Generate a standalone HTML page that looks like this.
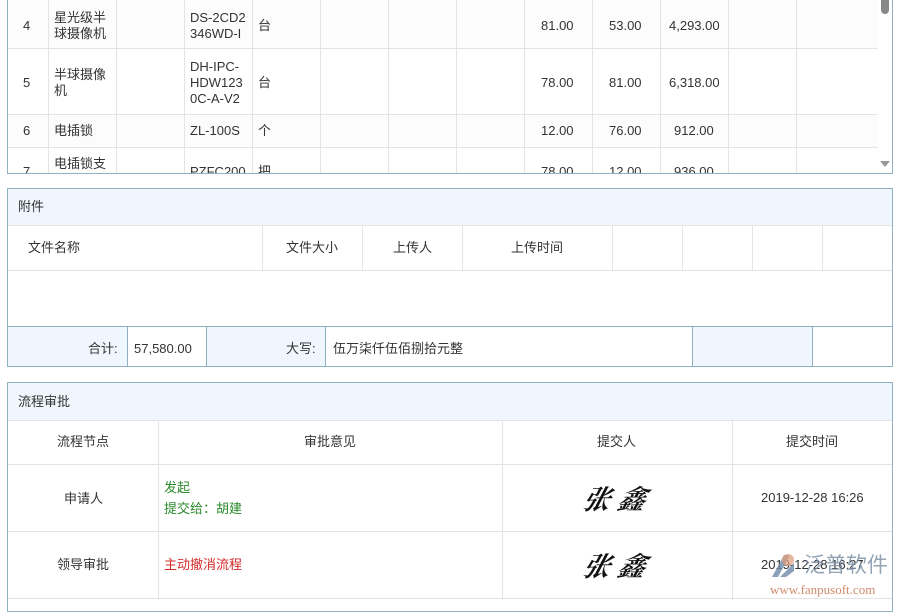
<!DOCTYPE html>
<html><head><meta charset="utf-8">
<style>
*{margin:0;padding:0;box-sizing:border-box}
body{width:900px;height:600px;overflow:hidden;background:#fff;font-family:"Liberation Sans","Noto Sans CJK SC",sans-serif;font-size:13px;color:#333;position:relative}
.a{position:absolute}
.vl{position:absolute;width:1px;background:#e4e4e4}
.hl{position:absolute;height:1px;background:#e4e4e4}
.t{position:absolute;white-space:nowrap;line-height:16px;margin-top:1px}
.frame{position:absolute;border:1px solid #8fb0c0}
.hd{position:absolute;background:#eff6fd}
.sig{position:absolute;white-space:nowrap;font-size:27px;line-height:30px;font-family:'Noto Serif CJK SC',serif;font-weight:700;font-style:italic;letter-spacing:8px;color:#111;transform:skewX(-15deg)}
</style></head><body>

<!-- top table -->
<div class="a" style="left:7px;top:0;width:886px;height:174px;overflow:hidden;border:1px solid #8fb0c0;border-top:none">
  <div class="a" style="left:0;top:0;width:870px;height:49px;background:#fcfcfc"></div>
  <div class="a" style="left:0;top:114px;width:870px;height:33px;background:#fcfcfc"></div>
  <div class="hl" style="left:0;top:48px;width:870px"></div>
  <div class="hl" style="left:0;top:114px;width:870px"></div>
  <div class="hl" style="left:0;top:147px;width:870px"></div>
  <div class="vl" style="left:40px;top:0;height:174px"></div>
  <div class="vl" style="left:108px;top:0;height:174px"></div>
  <div class="vl" style="left:176px;top:0;height:174px"></div>
  <div class="vl" style="left:244px;top:0;height:174px"></div>
  <div class="vl" style="left:312px;top:0;height:174px"></div>
  <div class="vl" style="left:380px;top:0;height:174px"></div>
  <div class="vl" style="left:448px;top:0;height:174px"></div>
  <div class="vl" style="left:516px;top:0;height:174px"></div>
  <div class="vl" style="left:584px;top:0;height:174px"></div>
  <div class="vl" style="left:652px;top:0;height:174px"></div>
  <div class="vl" style="left:720px;top:0;height:174px"></div>
  <div class="vl" style="left:788px;top:0;height:174px"></div>
  <div class="a" style="left:870px;top:0;width:16px;height:174px;background:#fff"></div>
  <div class="a" style="left:873px;top:0;width:8px;height:14px;background:#888;border-radius:0 0 4px 4px"></div>
  <div class="a" style="left:872px;top:161px;width:0;height:0;border-left:5px solid transparent;border-right:5px solid transparent;border-top:6px solid #999"></div>
</div>
<div class="t" style="left:23px;top:17px">4</div>
<div class="t" style="left:54px;top:9px">星光级半<br>球摄像机</div>
<div class="t" style="left:190px;top:9px">DS-2CD2<br>346WD-I</div>
<div class="t" style="left:258px;top:17px">台</div>
<div class="t" style="left:541px;top:17px">81.00</div>
<div class="t" style="left:609px;top:17px">53.00</div>
<div class="t" style="left:669px;top:17px">4,293.00</div>
<div class="t" style="left:23px;top:74px">5</div>
<div class="t" style="left:54px;top:66px">半球摄像<br>机</div>
<div class="t" style="left:190px;top:58px">DH-IPC-<br>HDW123<br>0C-A-V2</div>
<div class="t" style="left:258px;top:74px">台</div>
<div class="t" style="left:541px;top:74px">78.00</div>
<div class="t" style="left:609px;top:74px">81.00</div>
<div class="t" style="left:669px;top:74px">6,318.00</div>
<div class="t" style="left:23px;top:122px">6</div>
<div class="t" style="left:54px;top:122px">电插锁</div>
<div class="t" style="left:190px;top:122px">ZL-100S</div>
<div class="t" style="left:258px;top:122px">个</div>
<div class="t" style="left:541px;top:122px">12.00</div>
<div class="t" style="left:609px;top:122px">76.00</div>
<div class="t" style="left:674px;top:122px">912.00</div>
<div class="a" style="left:8px;top:148px;width:862px;height:25px;overflow:hidden">
  <div class="t" style="left:15px;top:15px">7</div>
  <div class="t" style="left:46px;top:7px">电插锁支</div>
  <div class="t" style="left:182px;top:15px">PZFC200</div>
  <div class="t" style="left:250px;top:15px">把</div>
  <div class="t" style="left:533px;top:15px">78.00</div>
  <div class="t" style="left:601px;top:15px">12.00</div>
  <div class="t" style="left:666px;top:15px">936.00</div>
</div>

<!-- attachments -->
<div class="frame" style="left:7px;top:188px;width:886px;height:179px"></div>
<div class="hd" style="left:8px;top:189px;width:884px;height:36px"></div>
<div class="t" style="left:18px;top:198px">附件</div>
<div class="hl" style="left:8px;top:225px;width:884px"></div>
<div class="hl" style="left:8px;top:270px;width:884px"></div>
<div class="vl" style="left:262px;top:225px;height:45px"></div>
<div class="vl" style="left:362px;top:225px;height:45px"></div>
<div class="vl" style="left:462px;top:225px;height:45px"></div>
<div class="vl" style="left:612px;top:225px;height:45px"></div>
<div class="vl" style="left:682px;top:225px;height:45px"></div>
<div class="vl" style="left:752px;top:225px;height:45px"></div>
<div class="vl" style="left:822px;top:225px;height:45px"></div>
<div class="t" style="left:28px;top:239px">文件名称</div>
<div class="t" style="left:286px;top:239px">文件大小</div>
<div class="t" style="left:393px;top:239px">上传人</div>
<div class="t" style="left:511px;top:239px">上传时间</div>
<div class="a" style="left:8px;top:326px;width:884px;height:1px;background:#8fb0c0"></div>
<div class="hd" style="left:8px;top:327px;width:119px;height:39px"></div>
<div class="a" style="left:127px;top:326px;width:1px;height:40px;background:#8fb0c0"></div>
<div class="hd" style="left:207px;top:327px;width:118px;height:39px"></div>
<div class="a" style="left:206px;top:326px;width:1px;height:40px;background:#8fb0c0"></div>
<div class="a" style="left:325px;top:326px;width:1px;height:40px;background:#8fb0c0"></div>
<div class="hd" style="left:693px;top:327px;width:119px;height:39px"></div>
<div class="a" style="left:692px;top:326px;width:1px;height:40px;background:#8fb0c0"></div>
<div class="a" style="left:812px;top:326px;width:1px;height:40px;background:#8fb0c0"></div>
<div class="t" style="left:88px;top:340px">合计:</div>
<div class="t" style="left:134px;top:340px">57,580.00</div>
<div class="t" style="left:286px;top:340px">大写:</div>
<div class="t" style="left:333px;top:340px">伍万柒仟伍佰捌拾元整</div>

<!-- flow -->
<div class="frame" style="left:7px;top:382px;width:886px;height:230px"></div>
<div class="hd" style="left:8px;top:383px;width:884px;height:37px"></div>
<div class="t" style="left:18px;top:393px">流程审批</div>
<div class="hl" style="left:8px;top:420px;width:884px"></div>
<div class="hl" style="left:8px;top:464px;width:884px"></div>
<div class="hl" style="left:8px;top:531px;width:884px"></div>
<div class="hl" style="left:8px;top:598px;width:884px"></div>
<div class="vl" style="left:158px;top:420px;height:180px"></div>
<div class="vl" style="left:502px;top:420px;height:180px"></div>
<div class="vl" style="left:732px;top:420px;height:180px"></div>
<div class="t" style="left:57px;top:433px">流程节点</div>
<div class="t" style="left:304px;top:433px">审批意见</div>
<div class="t" style="left:597px;top:433px">提交人</div>
<div class="t" style="left:786px;top:433px">提交时间</div>
<div class="t" style="left:64px;top:490px">申请人</div>
<div class="t" style="left:164px;top:479px;color:#2a8a2a">发起</div>
<div class="t" style="left:164px;top:500px;color:#2a8a2a">提交给：胡建</div>
<div class="t" style="left:57px;top:556px">领导审批</div>
<div class="t" style="left:164px;top:556px;color:#d42a2a">主动撤消流程</div>
<div class="sig" style="left:584px;top:483px">张鑫</div>
<div class="sig" style="left:584px;top:550px">张鑫</div>
<div class="t" style="left:761px;top:489px">2019-12-28 16:26</div>
<div class="t" style="left:761px;top:556px">2019-12-28 16:27</div>

<!-- watermark -->
<svg class="a" style="left:768px;top:551px" width="30" height="30" viewBox="0 0 30 30">
  <path d="M4 26 L16 4 L22 4 L10 26 Z" fill="#6d8aa8" opacity="0.8"/>
  <circle cx="20" cy="9" r="6" fill="#e0a080" opacity="0.75"/>
  <path d="M12 26 L26 12 L26 20 L18 26 Z" fill="#6d8aa8" opacity="0.8"/>
</svg>
<div class="t" style="left:804px;top:552px;font-size:21px;line-height:26px;color:#7f93aa;opacity:0.85;letter-spacing:0px">泛普软件</div>
<div class="t" style="left:770px;top:582px;font-size:13px;line-height:13px;font-family:'Liberation Serif',serif;color:#d08a6a">www.fanpusoft.com</div>
</body></html>
